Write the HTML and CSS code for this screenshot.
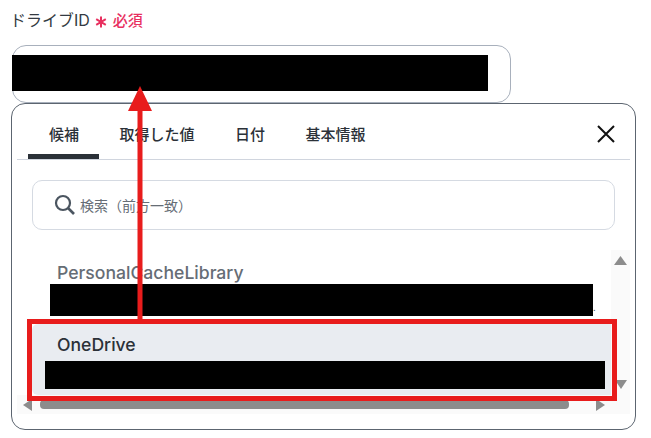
FILE: index.html
```html
<!DOCTYPE html>
<html lang="ja">
<head>
    <meta charset="UTF-8">
    <meta name="viewport" content="width=device-width, initial-scale=1.0">
    <title>ドライブID</title>
    <link rel="stylesheet" href="styles.css">
</head>
<body>
    <div class="page">
        <div class="label-row">
            <span class="label">ドライブID</span>
            <svg class="star" width="12" height="12" viewBox="0 0 12 12">
                <path d="M6 .5V11.5M1.2 3.2 10.8 8.8M10.8 3.2 1.2 8.8" stroke="#e8305f" stroke-width="2" fill="none"/>
            </svg>
            <span class="required">必須</span>
        </div>

        <div class="field">
            <div class="mask field-mask"></div>
        </div>

        <div class="panel">
            <div class="tabs">
                <div class="tab active">候補</div>
                <div class="tab">取得した値</div>
                <div class="tab">日付</div>
                <div class="tab">基本情報</div>
                <svg class="close" width="18" height="18" viewBox="0 0 18 18">
                    <path d="M1 1 17 17M17 1 1 17" stroke="#111" stroke-width="2" fill="none"/>
                </svg>
            </div>

            <div class="search">
                <svg width="22" height="22" viewBox="0 0 22 22">
                    <circle cx="9" cy="9" r="7" stroke="#4b5560" stroke-width="2.2" fill="none"/>
                    <path d="M14 14 20 20" stroke="#4b5560" stroke-width="2.6" fill="none"/>
                </svg>
                <span>検索（前方一致）</span>
            </div>

            <div class="scroll-area">
                <div class="list">
                    <div class="item">
                        <div class="item-name">PersonalCacheLibrary</div>
                        <div class="item-line">
                            <div class="mask mask-first"></div>
                            <span class="dot">.</span>
                        </div>
                    </div>
                    <div class="item selected">
                        <div class="item-name">OneDrive</div>
                        <div class="mask mask-second"></div>
                    </div>
                </div>
                <div class="vbar">
                    <svg width="13" height="9" viewBox="0 0 13 9"><path d="M6.5 0 13 9H0Z" fill="#8c8c8c"/></svg>
                    <svg width="12" height="9" viewBox="0 0 12 9"><path d="M0 0H12L6 9Z" fill="#8c8c8c"/></svg>
                </div>
                <div class="hbar">
                    <svg width="9" height="12" viewBox="0 0 9 12"><path d="M9 0V12L0 6Z" fill="#8c8c8c"/></svg>
                    <div class="thumb"></div>
                    <svg width="9" height="12" viewBox="0 0 9 12"><path d="M0 0V12L9 6Z" fill="#8c8c8c"/></svg>
                </div>
            </div>
        </div>

        <!-- red annotation on top of the screenshot -->
        <div class="highlight"></div>
        <svg class="arrow" width="24" height="235" viewBox="0 0 24 235">
            <path d="M12 20V235" stroke="#e81c1c" stroke-width="5" fill="none"/>
            <path d="M12 0 24 25H0Z" fill="#e81c1c"/>
        </svg>
    </div>
</body>
</html>
```

FILE: styles.css
```css
body {
    margin: 0;
    background: #fff;
    font-family: Inter, "Noto Sans CJK JP", sans-serif;
    color: #333a42;
}
.page {
    position: relative;
    width: 651px;
    height: 438px;
    overflow: hidden;
}
.mask {
    background: #000;
}
.label-row {
    height: 45px;
    padding: 0 0 7px 10px;
    box-sizing: border-box;
    display: flex;
    align-items: center;
}
.label {
    font-size: 16px;
}
.star {
    margin: 5px 6px 0 5px;
}
.required {
    font-size: 15px;
    font-weight: 500;
    color: #e8305f;
}
.field {
    width: 499px;
    height: 58px;
    margin-left: 12px;
    box-sizing: border-box;
    border: 1px solid #a8b0bc;
    border-radius: 14px;
    padding-top: 9px;
}
.field-mask {
    width: 476px;
    height: 36px;
    margin-left: -1px;
}
.panel {
    width: 625px;
    height: 327px;
    margin-left: 11px;
    box-sizing: border-box;
    border: 1px solid #5c6570;
    border-radius: 14px;
    padding: 0 5px;
}
.tabs {
    height: 56px;
    box-sizing: border-box;
    border-bottom: 1px solid #d0d5de;
    padding-left: 11px;
    display: flex;
}
.tab {
    height: 55px;
    box-sizing: border-box;
    padding: 20px 20.25px 0;
    font-size: 15px;
    line-height: 22px;
    font-weight: 500;
    color: #2b3138;
}
.tab.active {
    padding-left: 21px;
    border-bottom: 5px solid #2b3138;
    border-radius: 5px 5px 0 0;
}
.close {
    margin: 21px 15px 0 auto;
}
.search {
    width: 583px;
    height: 50px;
    margin: 20px 0 0 15px;
    box-sizing: border-box;
    border: 1px solid #d5dae2;
    border-radius: 10px;
    padding-left: 21px;
    display: flex;
    align-items: center;
    gap: 4px;
    font-size: 14px;
    color: #666d75;
}
.scroll-area {
    margin-top: 20px;
    display: grid;
    grid-template-columns: 594px 19px;
    grid-template-rows: 145px 19px;
}
.list {
    padding-top: 10px;
    box-sizing: border-box;
}
.item-name {
    font-size: 17.6px;
    line-height: 26px;
    margin-bottom: -2px;
    font-weight: 500;
    padding-left: 40px;
    color: #666d75;
}
.item-line {
    display: flex;
    align-items: flex-end;
    padding-left: 33px;
    height: 32px;
    margin-bottom: 8px;
}
.mask-first {
    width: 543px;
    height: 32px;
}
.dot {
    font-size: 9px;
    line-height: 16px;
    color: #456;
}
.selected {
    height: 71px;
    margin-left: 15px;
    box-sizing: border-box;
    background: #e9ecf1;
    padding-top: 8px;
    border-radius: 6px 0 0 6px;
}
.selected .item-name {
    padding-left: 25px;
    color: #2b3138;
}
.mask-second {
    width: 560px;
    height: 28px;
    margin-top: 5px;
    margin-left: 13px;
}
.vbar {
    grid-column: 2;
    grid-row: 1 / 3;
    background: #fafafa;
    display: flex;
    flex-direction: column;
    align-items: center;
    gap: 115px;
    padding-top: 6px;
}
.hbar {
    grid-column: 1;
    grid-row: 2;
    background: #fafafa;
    display: flex;
    align-items: center;
    padding-left: 6px;
}
.thumb {
    width: 529px;
    height: 9px;
    margin: 0 27px 0 8px;
    background: #8c8c8c;
    border-radius: 4px;
}
.highlight {
    position: absolute;
    left: 27px;
    top: 319px;
    width: 590px;
    height: 82px;
    box-sizing: border-box;
    border: 5px solid #e81c1c;
}
.arrow {
    position: absolute;
    left: 128px;
    top: 86px;
}
```
